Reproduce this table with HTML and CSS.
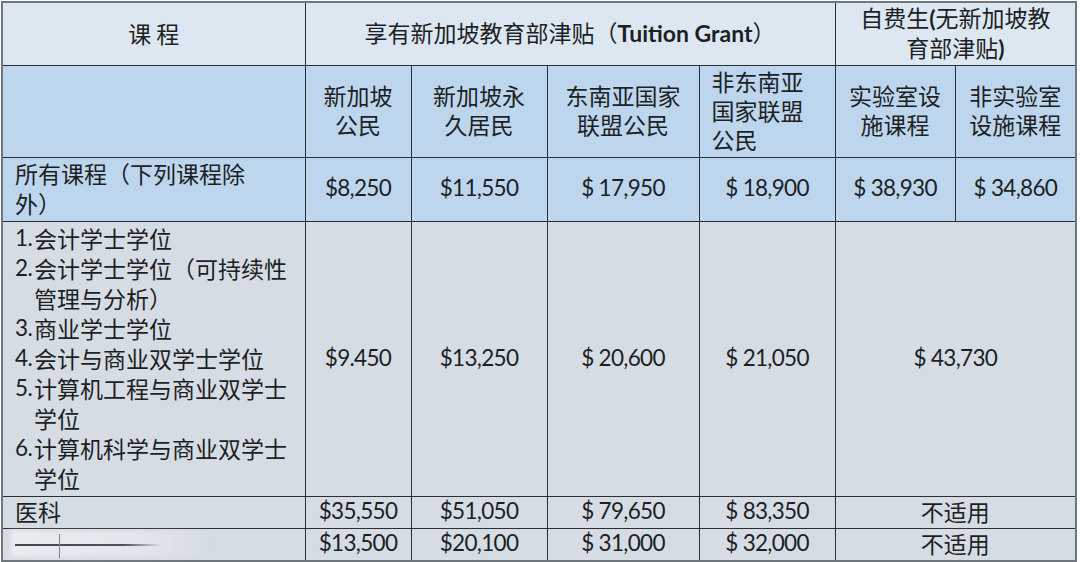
FILE: index.html
```html
<!DOCTYPE html>
<html lang="zh-CN">
<head>
<meta charset="utf-8">
<title>学费</title>
<link rel="stylesheet" href="styles.css">
</head>
<body>
<div class="wrap">
<table class="fees">
  <colgroup>
    <col class="c0"><col class="c1"><col class="c2"><col class="c3"><col class="c4"><col class="c5"><col class="c6">
  </colgroup>
  <tr class="r1">
    <td class="hd">课&nbsp;程</td>
    <td class="hd" colspan="4">享有新加坡教育部津贴（<b class="lat">Tuition Grant</b>）</td>
    <td class="hd" colspan="2">自费生<span class="lat b">(</span>无新加坡教<br>育部津贴<span class="lat b">)</span></td>
  </tr>
  <tr class="r2">
    <td></td>
    <td>新加坡<br>公民</td>
    <td>新加坡永<br>久居民</td>
    <td>东南亚国家<br>联盟公民</td>
    <td class="left">非东南亚<br>国家联盟<br>公民</td>
    <td>实验室设<br>施课程</td>
    <td>非实验室<br>设施课程</td>
  </tr>
  <tr class="r3">
    <td class="name">所有课程（下列课程除<br>外）</td>
    <td class="num">$8,250</td>
    <td class="num">$11,550</td>
    <td class="num">$ 17,950</td>
    <td class="num">$ 18,900</td>
    <td class="num">$ 38,930</td>
    <td class="num">$ 34,860</td>
  </tr>
  <tr class="r4">
    <td class="name">
      <div class="item"><span class="no lat">1.</span><span>会计学士学位</span></div>
      <div class="item"><span class="no lat">2.</span><span>会计学士学位（可持续性<br>管理与分析）</span></div>
      <div class="item"><span class="no lat">3.</span><span>商业学士学位</span></div>
      <div class="item"><span class="no lat">4.</span><span>会计与商业双学士学位</span></div>
      <div class="item"><span class="no lat">5.</span><span>计算机工程与商业双学士<br>学位</span></div>
      <div class="item"><span class="no lat">6.</span><span>计算机科学与商业双学士<br>学位</span></div>
    </td>
    <td class="num">$9.450</td>
    <td class="num">$13,250</td>
    <td class="num">$ 20,600</td>
    <td class="num">$ 21,050</td>
    <td class="num" colspan="2">$ 43,730</td>
  </tr>
  <tr class="r5">
    <td class="name">医科</td>
    <td class="num">$35,550</td>
    <td class="num">$51,050</td>
    <td class="num">$ 79,650</td>
    <td class="num">$ 83,350</td>
    <td colspan="2">不适用</td>
  </tr>
  <tr class="r6">
    <td class="name"><div class="smudge"><span class="haze"></span><span class="bar"></span><span class="tick"></span></div></td>
    <td class="num">$13,500</td>
    <td class="num">$20,100</td>
    <td class="num">$ 31,000</td>
    <td class="num">$ 32,000</td>
    <td colspan="2">不适用</td>
  </tr>
</table>
</div>
</body>
</html>
```
FILE: styles.css
```css
html, body {
  margin: 0;
  padding: 0;
  background: #ffffff;
}
.wrap {
  padding: 1px 0 0 1px;
}
.fees {
  border-collapse: collapse;
  table-layout: fixed;
  width: 1075px;
  border: 2px solid #6d777d;
  font-family: "Noto Sans CJK SC", "Noto Sans", sans-serif;
  font-size: 23px;
  line-height: 30px;
  color: #1c1f23;
}
.c0 { width: 303px; }
.c1 { width: 106px; }
.c2 { width: 136px; }
.c3 { width: 152px; }
.c4 { width: 136px; }
.c5 { width: 120px; }
.c6 { width: 121px; }
.fees td {
  border: 1px solid #2b2f33;
  padding: 0 0 3px 0;
  text-align: center;
  vertical-align: middle;
}
.fees .r1 td { background: #dce7f2; height: 58px; line-height: 29px; padding-bottom: 2px; }
.r2 td { background: #bdd6ee; height: 88px; line-height: 29px; }
.r3 td { background: #bdd6ee; height: 56px; }
.r4 td { background: #d6dce3; height: 271px; }
.r5 td { background: #d6dce3; height: 28px; line-height: 26px; }
.r6 td { background: #d6dce3; height: 28px; line-height: 26px; }
.fees td.left {
  text-align: left;
  padding-left: 12px;
}
.fees td.name {
  text-align: left;
  padding-left: 12px;
}
.lat {
  font-family: "Lato", "Liberation Sans", sans-serif;
}
.b { font-weight: 700; }
b.lat { font-weight: 700; }
.num {
  font-family: "Lato", "Liberation Sans", sans-serif;
  font-size: 22.5px;
  letter-spacing: -0.7px;
}
.item {
  display: flex;
}
.no {
  width: 19px;
  flex: none;
  font-size: 22.5px;
  letter-spacing: -0.5px;
}
.smudge {
  position: relative;
  height: 26px;
}
.haze {
  position: absolute;
  left: -4px;
  top: 1px;
  width: 200px;
  height: 26px;
  background: linear-gradient(90deg, rgba(238,240,243,0.8) 0%, rgba(232,235,239,0.6) 70%, rgba(214,220,227,0) 100%);
  filter: blur(2px);
}
.bar {
  position: absolute;
  left: 0;
  top: 14px;
  width: 146px;
  height: 2px;
  background: linear-gradient(90deg, #41464c 0%, #50555b 75%, rgba(90,95,100,0) 100%);
  filter: blur(0.5px);
}
.tick {
  position: absolute;
  left: 44px;
  top: 4px;
  width: 1px;
  height: 24px;
  background: #7d838a;
  filter: blur(0.5px);
}
```
